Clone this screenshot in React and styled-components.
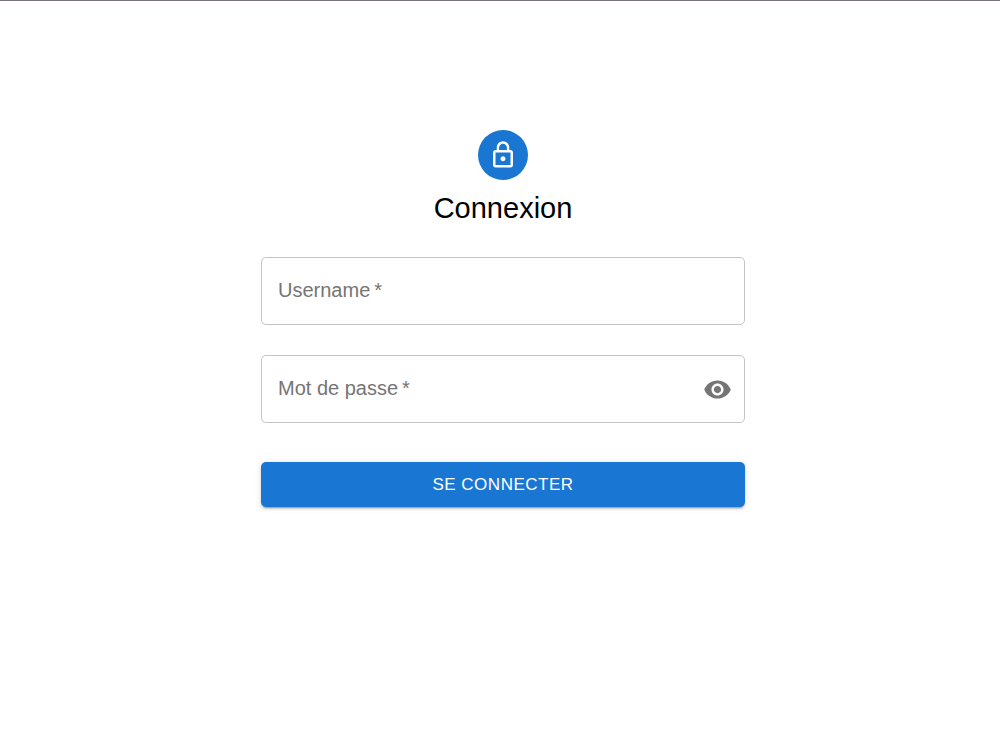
import React, { useState } from 'react';
import styled, { createGlobalStyle } from 'styled-components';

const GlobalStyle = createGlobalStyle`
  *, *::before, *::after {
    box-sizing: border-box;
  }
  body {
    margin: 0;
    background: #fff;
    color: #000;
    font-family: "Liberation Sans", Arial, sans-serif;
  }
`;

const Page = styled.div`
  min-height: 100vh;
  border-top: 1px solid #79747c;
  padding: 129px 16px 40px 22px;
`;

const Panel = styled.main`
  display: flex;
  flex-direction: column;
  align-items: center;
  width: 100%;
  max-width: 484px;
  margin: 0 auto;
`;

const Avatar = styled.div`
  display: flex;
  align-items: center;
  justify-content: center;
  width: 50px;
  height: 50px;
  border-radius: 50%;
  background: #1976d2;
  color: #fff;
`;

const Title = styled.h1`
  margin: 9px 0 0;
  font-size: 29px;
  font-weight: 400;
  line-height: 39px;
`;

const Form = styled.form`
  display: flex;
  flex-direction: column;
  width: 100%;
  margin-top: 29px;
`;

const Field = styled.div`
  position: relative;
  display: flex;
  align-items: center;
  height: 68px;
  margin-bottom: 30px;
  padding-right: 12px;
  border: 1px solid #c4c4c4;
  border-radius: 5px;

  &:focus-within {
    border-color: #1976d2;
  }
`;

const Label = styled.label`
  position: absolute;
  left: 16px;
  top: ${(p) => (p.$raised ? '-10px' : '20px')};
  background: #fff;
  color: #757575;
  font-size: ${(p) => (p.$raised ? '15px' : '20px')};
  line-height: ${(p) => (p.$raised ? '18px' : '25px')};
  pointer-events: none;
`;

const Input = styled.input`
  flex: 1;
  min-width: 0;
  height: 100%;
  padding: 0 16px;
  border: 0;
  outline: 0;
  background: transparent;
  font: inherit;
  font-size: 20px;
`;

const IconButton = styled.button`
  display: flex;
  padding: 0;
  border: 0;
  border-radius: 50%;
  background: transparent;
  color: #757575;
  cursor: pointer;
`;

const SubmitButton = styled.button`
  height: 45px;
  margin-top: 9px;
  padding: 0 20px;
  border: 0;
  border-radius: 5px;
  background: #1976d2;
  box-shadow: 0 3px 1px -2px rgba(0, 0, 0, 0.2), 0 2px 2px rgba(0, 0, 0, 0.14),
    0 1px 6px rgba(0, 0, 0, 0.12);
  color: #fff;
  font: inherit;
  font-size: 17px;
  letter-spacing: 0.03em;
  text-transform: uppercase;
  cursor: pointer;
`;

function LockIcon() {
  return (
    <svg width="30" height="30" viewBox="0 0 24 24" fill="currentColor" aria-hidden="true">
      <path d="M12 17c1.100 0 2-.9 2-2s-.9-2-2-2-2 .9-2 2 .9 2 2 2zm6-9h-1V6c0-2.760-2.240-5-5-5S7 3.240 7 6v2H6c-1.100 0-2 .9-2 2v10c0 1.100.9 2 2 2h12c1.100 0 2-.9 2-2V10c0-1.100-.9-2-2-2zM8.900 6c0-1.710 1.390-3.100 3.100-3.100s3.100 1.390 3.100 3.100v2H8.900V6zM18 20H6V10h12v10z" />
    </svg>
  );
}

function EyeIcon() {
  return (
    <svg width="29" height="29" viewBox="0 0 24 24" fill="currentColor" aria-hidden="true">
      <path d="M12 4.500C7 4.500 2.730 7.610 1 12c1.730 4.390 6 7.500 11 7.500s9.270-3.110 11-7.500c-1.730-4.390-6-7.500-11-7.500zM12 17c-2.760 0-5-2.240-5-5s2.240-5 5-5 5 2.240 5 5-2.240 5-5 5zm0-8c-1.660 0-3 1.340-3 3s1.340 3 3 3 3-1.340 3-3-1.340-3-3-3z" />
    </svg>
  );
}

function TextField({ id, label, type = 'text', autoComplete, children }) {
  const [value, setValue] = useState('');
  const [focused, setFocused] = useState(false);
  return (
    <Field>
      <Input
        id={id}
        type={type}
        value={value}
        autoComplete={autoComplete}
        required
        onChange={(e) => setValue(e.target.value)}
        onFocus={() => setFocused(true)}
        onBlur={() => setFocused(false)}
      />
      <Label htmlFor={id} $raised={focused || value !== ''}>
        {label}{'\u2009'}*
      </Label>
      {children}
    </Field>
  );
}

export default function App() {
  const [visible, setVisible] = useState(false);
  return (
    <>
      <GlobalStyle />
      <Page>
        <Panel>
          <Avatar>
            <LockIcon />
          </Avatar>
          <Title>Connexion</Title>
          <Form onSubmit={(e) => e.preventDefault()}>
            <TextField id="username" label="Username" autoComplete="username" />
            <TextField
              id="password"
              label="Mot de passe"
              type={visible ? 'text' : 'password'}
              autoComplete="current-password"
            >
              <IconButton
                type="button"
                aria-label="Afficher le mot de passe"
                aria-pressed={visible}
                onClick={() => setVisible(!visible)}
              >
                <EyeIcon />
              </IconButton>
            </TextField>
            <SubmitButton type="submit">Se connecter</SubmitButton>
          </Form>
        </Panel>
      </Page>
    </>
  );
}
